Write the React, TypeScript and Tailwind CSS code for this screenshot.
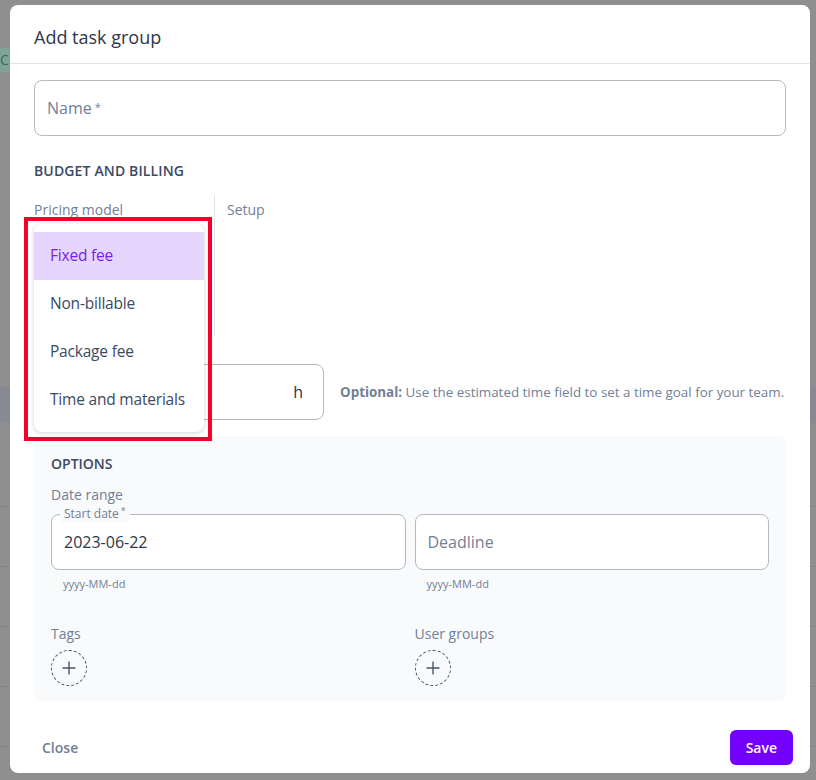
import React from "react";

const font = { fontFamily: '"Open Sans", "Liberation Sans", sans-serif' };

const PlusCircle = () => (
  <button className="w-9 h-9 rounded-full border border-dashed border-[#4a5568] flex items-center justify-center text-[#4a5568]">
    <svg width="16" height="16" viewBox="0 0 16 16" fill="none" stroke="currentColor" strokeWidth="1.4">
      <path d="M8 1.5v13M1.5 8h13" />
    </svg>
  </button>
);

const pricingOptions = ["Fixed fee", "Non-billable", "Package fee", "Time and materials"];

export default function App() {
  return (
    <div className="relative w-[816px] h-[780px] overflow-hidden bg-[#8f8f8f]" style={font}>
      {/* page behind the backdrop */}
      <div className="flex flex-col pt-[48px]">
        <div className="h-[24px] w-[40px] -ml-[24px] bg-[#7fa394] text-[#3c6b57] text-sm pl-[24px] leading-[24px]">C</div>
        <div className="h-[315px]" />
        <div className="h-[36px] bg-[#878a92]" />
        <div className="h-[84px] border-b border-[#838383]" />
        <div className="h-[60px] border-b border-[#838383]" />
        <div className="h-[60px] border-b border-[#838383]" />
        <div className="h-[60px] border-b border-[#838383]" />
        <div className="h-[60px] border-b border-[#838383]" />
      </div>

      {/* modal */}
      <div className="absolute left-[10px] top-[5px] w-[800px] h-[768px] bg-white rounded-[8px] flex flex-col">
        <div className="h-[59px] shrink-0 px-6 pt-[6px] flex items-center border-b border-[#e2e4e8]">
          <h2 className="text-[18px] text-[#2d3748]">Add task group</h2>
        </div>

        <div className="px-6 pt-4 flex-1 min-h-0 flex flex-col">
          <div className="h-[56px] shrink-0 border border-[#b5bac2] rounded-[8px] flex items-center px-3">
            <span className="text-[16px] text-[#718096]">
              Name<sup className="text-[11px] ml-[3px] relative -top-[3px]">*</sup>
            </span>
          </div>

          <h3 className="mt-[24px] text-[14px] font-semibold text-[#3b4a63] uppercase tracking-[0.01em]">Budget and billing</h3>

          <div className="mt-[14px] flex h-[141px] shrink-0">
            <div className="w-[181px] border-r border-[#e2e4e8] text-[14px] text-[#718096] pt-[4px]">Pricing model</div>
            <div className="pl-3 text-[14px] text-[#718096] pt-[4px]">Setup</div>
          </div>

          <div className="mt-[28px] flex items-center gap-4">
            <div className="w-[290px] h-[56px] border border-[#b5bac2] rounded-[8px] flex items-center justify-end px-5 text-[16px] text-[#2d3748]">h</div>
            <p className="text-[13.4px] text-[#718096] whitespace-nowrap">
              <span className="font-bold">Optional:</span> Use the estimated time field to set a time goal for your team.
            </p>
          </div>

          <div className="mt-[16px] bg-[#f9fafb] rounded-[8px] px-[17px] pt-[17px] pb-[15px]">
            <h3 className="text-[14px] font-semibold text-[#3b4a63] uppercase">Options</h3>
            <div className="mt-[10px] text-[14px] text-[#718096]">Date range</div>
            <div className="mt-[9px] grid grid-cols-2 gap-[9px]">
              <div>
                <div className="relative h-[56px] border border-[#b5bac2] rounded-[8px] flex items-center px-3 bg-white">
                  <span className="absolute -top-[9px] left-[8px] px-1 bg-[#f9fafb] text-[12px] text-[#718096] leading-[16px]">
                    Start date<sup className="text-[9px] ml-[2px]">*</sup>
                  </span>
                  <span className="text-[16px] text-[#2d3748]">2023-06-22</span>
                </div>
                <div className="mt-[6px] pl-3 text-[11px] text-[#718096]">yyyy-MM-dd</div>
              </div>
              <div>
                <div className="h-[56px] border border-[#b5bac2] rounded-[8px] flex items-center px-3 bg-white">
                  <span className="text-[16px] text-[#718096]">Deadline</span>
                </div>
                <div className="mt-[6px] pl-3 text-[11px] text-[#718096]">yyyy-MM-dd</div>
              </div>
            </div>
            <div className="mt-[30px] grid grid-cols-2 gap-[9px]">
              <div>
                <div className="text-[14px] text-[#718096]">Tags</div>
                <div className="mt-[6px]"><PlusCircle /></div>
              </div>
              <div>
                <div className="text-[14px] text-[#718096]">User groups</div>
                <div className="mt-[6px]"><PlusCircle /></div>
              </div>
            </div>
          </div>
        </div>

        <div className="h-[68px] shrink-0 px-8 pb-[8px] flex items-end justify-between">
          <button className="h-[35px] text-[14px] font-semibold text-[#718096]">Close</button>
          <button className="h-[35px] px-4 rounded-[6px] bg-[#7200fa] text-white text-[14px] font-semibold -mr-[15px]">Save</button>
        </div>
      </div>

      {/* open pricing model dropdown */}
      <div className="absolute left-[34px] top-[224px] w-[170px] bg-white rounded-[8px] shadow-[0_1px_4px_rgba(0,0,0,0.18)] py-2">
        {pricingOptions.map((o, i) => (
          <div
            key={o}
            className={
              i === 0
                ? "h-[48px] px-4 flex items-center whitespace-nowrap text-[15.5px] tracking-[-0.2px] bg-[#e6d6fd] text-[#7a1bf0]"
                : "h-[48px] px-4 flex items-center whitespace-nowrap text-[15.5px] tracking-[-0.2px] text-[#3b4a63]"
            }
          >
            {o}
          </div>
        ))}
      </div>

      {/* annotation highlight */}
      <div className="absolute left-[24px] top-[217px] w-[188px] h-[224px] border-[4px] border-[#f5002a] pointer-events-none" />
    </div>
  );
}
